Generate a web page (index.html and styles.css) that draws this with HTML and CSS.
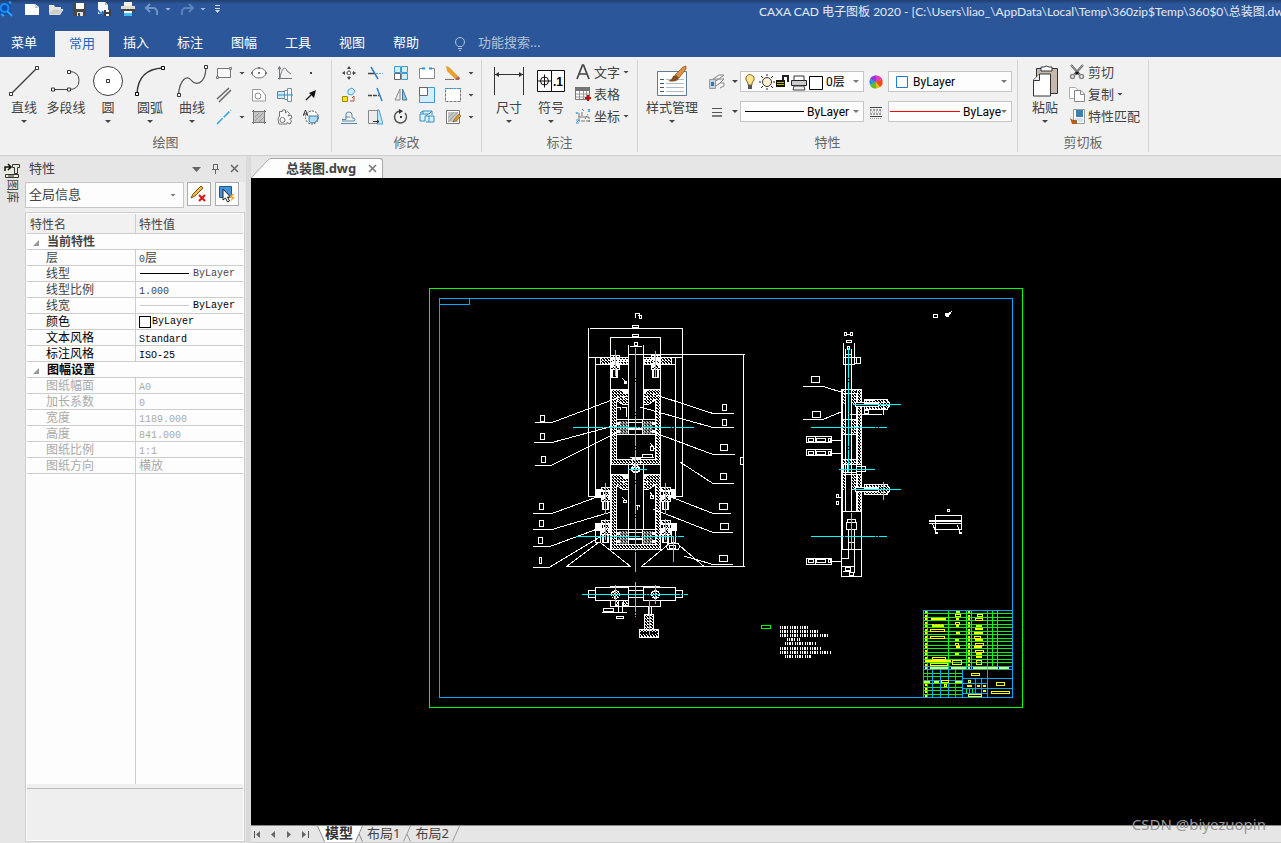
FILE: index.html
```html
<!DOCTYPE html>
<html lang="zh-CN">
<head>
<meta charset="utf-8">
<title>CAXA CAD 电子图板 2020</title>
<link rel="stylesheet" href="styles.css">
</head>
<body>
<header class="titlebar">
  <div class="quick">
    <svg class="logo" width="13" height="20" viewBox="0 0 13 20"><path d="M0 6 5 3l4 1 2 3-1 2 2 3-3 2 2 4-4-3-7 1z" fill="#0d4fae"/><circle cx="4.500" cy="9" r="4" fill="none" stroke="#1b8cf5" stroke-width="2"/><path d="M7 12l5 5M1 15l3 2M9 3l2 1" stroke="#29a3ff" stroke-width="2"/></svg>
    <button class="qbtn" aria-label="新建"><svg width="16" height="16"><path d="M1 3h10l4 3v8H1z" fill="#fff"/><path d="M11 3v4h4z" fill="#c9c9c9"/></svg></button>
    <button class="qbtn" aria-label="打开"><svg width="16" height="16"><path d="M1 13V4h5l1 2h6v2H5z" fill="#e8e5df"/><path d="M4.500 8.500H15l-3 5H1.500z" fill="#d0ccc4" stroke="#fff" stroke-width=".7"/></svg></button>
    <button class="qbtn" aria-label="保存"><svg width="16" height="16"><path d="M1 2h12l1 1v12H2l-1-1z" fill="#484848"/><path d="M4 2h8v6H4z" fill="#fff"/><path d="M5 11h6v4H5z" fill="#e4e4e4"/><path d="M6 12h2v3H6z" fill="#484848"/></svg></button>
    <button class="qbtn" aria-label="另存为"><svg width="16" height="16"><path d="M2 1h7l3 3v9H2z" fill="#f8f8f8"/><path d="M9 1v3h3" fill="#bbb"/><path d="M2 9l2 3h4M6 10l2 2-2 2" fill="none" stroke="#2870b5" stroke-width="1.500"/><path d="M8 9h7v6H8z" fill="#3d3d3d"/><path d="M10 9h3v2h-3zM10 13h3v2h-3z" fill="#fff"/></svg></button>
    <button class="qbtn" aria-label="打印"><svg width="16" height="16"><path d="M4 1h8v5H4z" fill="#f7f2e8"/><path d="M1 5h14v6H1z" fill="#dedad4"/><path d="M1 8h14v3H1z" fill="#474747"/><path d="M4 10h8v5H4z" fill="#41bdf0"/><path d="M4 10h8v2H4z" fill="#fff"/></svg></button>
    <button class="qbtn dim" aria-label="撤销"><svg width="16" height="16"><path d="M6 3 2 7l4 4M3 7h6q5 0 4 7" fill="none" stroke="#7094ca" stroke-width="2"/></svg><span class="caret light"></span></button>
    <button class="qbtn dim" aria-label="重做"><svg width="16" height="16"><path d="M10 3l4 4-4 4M13 7H7q-5 0-4 7" fill="none" stroke="#5c82bb" stroke-width="2"/></svg><span class="caret light"></span></button>
    <button class="qmore" aria-label="自定义"><svg width="7" height="10"><path d="M1 1.500h5M1 4.500h5" stroke="#d5deed"/><path d="M1 6h5L3.500 9z" fill="#d5deed"/></svg></button>
  </div>
  <h1 class="title">CAXA CAD 电子图板 2020 - [C:\Users\liao_\AppData\Local\Temp\360zip$Temp\360$0\总装图.dwg</h1>
</header>
<nav class="menu">
  <button>菜单</button><button class="on">常用</button><button>插入</button><button>标注</button><button>图幅</button><button>工具</button><button>视图</button><button>帮助</button>
  <svg class="bulb" width="12" height="14"><path d="M4 9.500Q1.500 7.500 1.500 5a4.500 4.500 0 0 1 9 0Q10.500 7.500 8 9.500zM4 11.500h4M5 13.500h2" fill="none" stroke="#b4c1d8"/></svg>
  <input class="search" type="text" aria-label="功能搜索" placeholder="功能搜索...">
</nav>

<section class="ribbon">
  <div class="group g-draw">
    <div class="tools">
      <button class="big"><svg width="32" height="32"><path d="M3 29 29 3" stroke="#454545" stroke-width="1.500"/><path d="M1.500 27.500h3v3h-3zM27.500 1.500h3v3h-3z" fill="#fff" stroke="#333"/></svg><span>直线</span><i class="caret"></i></button>
      <button class="big"><svg width="32" height="32"><path d="M3 24.500h16q10 0 10-9t-10-9" fill="none" stroke="#454545"/><path d="M1.500 23h3v3h-3zM17.500 23h3v3h-3zM17.500 5.500h3v3h-3z" fill="#fff" stroke="#333"/></svg><span>多段线</span></button>
      <button class="big"><svg width="32" height="32"><circle cx="16" cy="16" r="14.500" fill="#fff" stroke="#404040"/><path d="M14.500 14.500h3v3h-3z" fill="#fff" stroke="#333"/></svg><span>圆</span><i class="caret"></i></button>
      <button class="big"><svg width="32" height="32"><path d="M3 29Q4 4 29 3" fill="none" stroke="#333" stroke-width="1.300"/><path d="M1.500 27.500h3v3h-3zM27.500 1.500h3v3h-3z" fill="#fff" stroke="#000"/></svg><span>圆弧</span><i class="caret"></i></button>
      <button class="big"><svg width="32" height="32"><path d="M2.500 29C4 14 11 10 15 15s14 6 15-12" fill="none" stroke="#555" stroke-width="1.200"/><path d="M1.500 28.500h3v3h-3zM28.500.5h3v3h-3z" fill="#fff" stroke="#333"/></svg><span>曲线</span><i class="caret"></i></button>
      <div class="mini draw-mini">
        <button class="drop" aria-label="矩形"><svg width="16" height="16"><path d="M1.500 3.500h13v9h-13z" fill="#fafafa" stroke="#777"/><path d="M.5 11.500h2v2h-2zM13.500 2.500h2v2h-2z" fill="#fff" stroke="#777"/></svg><i class="caret"></i></button>
        <button aria-label="椭圆"><svg width="16" height="16"><ellipse cx="8" cy="8" rx="7" ry="5" fill="#fff" stroke="#777"/><path d="M7 7h2v2H7zM0 7h2v2H0zM14 7h2v2h-2zM7 2h2v2H7z" fill="#777"/></svg></button>
        <button aria-label="公式曲线"><svg width="16" height="16"><path d="M2.500 2v12.500M1 13.500h14M3 13C5 1 9 2 10 6t4 3M1 4.500l1.500-3 1.500 3" fill="none" stroke="#71757d"/></svg></button>
        <button aria-label="点"><svg width="16" height="16"><path d="M7 7h2v2H7z" fill="#444"/></svg></button>
        <button aria-label="平行线"><svg width="16" height="16"><path d="M1 12 13 1M3 15 15 3" stroke="#666" stroke-width="1.500"/></svg></button>
        <button aria-label="轮廓"><svg width="16" height="16"><path d="M1.500 14V2.500H10L14.500 8v6z" fill="#fff" stroke="#999"/><circle cx="7" cy="9" r="3" fill="none" stroke="#8a8f98"/></svg></button>
        <button aria-label="轴"><svg width="16" height="16"><path d="M.5 4.500h7v7h-7z" fill="#cde9fa" stroke="#6e8090"/><path d="M7.500 3.500h3v9h-3zM10.500 1.500h4v13h-4z" fill="#f2f8fc" stroke="#6f93b0"/><path d="M0 8h16" stroke="#328dc8"/></svg></button>
        <button aria-label="箭头"><svg width="16" height="16"><path d="m3 13 5-5" stroke="#222" stroke-width="1.500"/><path d="m13 3-2 8-2-2-3-3z" fill="#111"/></svg></button>
        <button class="drop" aria-label="构造线"><svg width="16" height="16"><path d="M1 15 15 1" stroke="#35a5dd" stroke-width="1.500" stroke-dasharray="8 1.500"/></svg><i class="caret"></i></button>
        <button aria-label="剖面线"><svg width="16" height="16"><path d="M3 3h10v10H3z" fill="#c4c4c4"/><path d="M1 2.500h14M1 13.500h14M2.500 1v14M13.500 1v14" stroke="#777"/><path d="m4 8 4-4M4 12l8-8M8 13l5-5" stroke="#999"/></svg></button>
        <button aria-label="齿轮"><svg width="16" height="16"><path d="M2.500 7V2.500h3V1h3v3l2-1.500 2 2L11 7l3-1 1 3-2.500 1 2 2-1.500 3-3-1.500V15H2l-1-5z" fill="#fafafa" stroke="#777"/><circle cx="5.500" cy="11" r="2.500" fill="#fff" stroke="#777"/></svg></button>
        <button aria-label="局部放大"><svg width="16" height="16"><circle cx="9" cy="8.500" r="6.500" fill="#fff" stroke="#555" stroke-dasharray="2 1"/><path d="M6 7h9q0 7-6 7-2 0-3-2z" fill="#a9dffb" stroke="#49758e"/><path d="M0 7 2.500 1 5 7M1 5h3" fill="none" stroke="#333"/></svg></button>
      </div>
    </div>
    <h2>绘图</h2>
  </div>

  <div class="group g-edit">
    <div class="tools">
      <div class="mini edit-mini">
        <button aria-label="平移"><svg width="16" height="16"><path d="M8 2v12M2 8h12" stroke="#666" stroke-dasharray="2 1"/><path d="M8 1l2 3H6zM8 15l2-3H6zM1 8l3-2v4zM15 8l-3-2v4z" fill="#444"/><path d="M6.500 6.500h3v3h-3z" fill="#fff" stroke="#777"/></svg></button>
        <button aria-label="裁剪"><svg width="16" height="16"><path d="m4 2 7 12" stroke="#2d7fc0" stroke-width="1.500"/><path d="M1 8.500h6" stroke="#444" stroke-width="1.500"/><path d="M9 8.500h7" stroke="#58a7d8" stroke-dasharray="2 1"/></svg></button>
        <button aria-label="阵列"><svg width="16" height="16"><path d="M1.500 1.500h6v6h-6zM8.500 1.500h6v6h-6zM8.500 8.500h6v6h-6z" fill="#d3eefd" stroke="#3b9bd6"/><path d="M1.500 8.500h6v6h-6z" fill="#fff" stroke="#666"/></svg></button>
        <button aria-label="打断"><svg width="16" height="16"><path d="M3 3.500H.5v10h15v-10H13" fill="none" stroke="#888"/><path d="M1 4h14v9H1z" fill="#fff"/><path d="M3 3.500h3M10 3.500h3" stroke="#2b91d8" stroke-width="2"/></svg></button>
        <button class="drop" aria-label="删除"><svg width="16" height="16"><path d="M1 1l3 1 9 9-3 3L2 6z" fill="#e8a12b"/><path d="m10 14 3-3 2 2-1 2h-3z" fill="#b26059"/><path d="M0 14.500h9" stroke="#777"/></svg><i class="caret"></i></button>
        <button aria-label="平移复制"><svg width="16" height="16"><path d="M1.500 9.500h5v5h-5z" fill="#f8e71c" stroke="#a08a00"/><path d="M7 3l4-2 3 3-3 4-4-1z" fill="#d3eefd" stroke="#46a2d8"/><path d="M9 14h4V9l-2 2" fill="none" stroke="#c04c37"/></svg></button>
        <button aria-label="延伸"><svg width="16" height="16"><path d="m10 1 5 13" stroke="#2d7fc0" stroke-width="1.500"/><path d="M1 8.500h11" stroke="#444" stroke-width="1.500" stroke-dasharray="4 1"/></svg></button>
        <button aria-label="镜像"><svg width="16" height="16"><path d="M7 2v11H2z" fill="#eee" stroke="#888"/><path d="M9.500 2v11H14z" fill="#8fc9ee" stroke="#46779c"/></svg></button>
        <button aria-label="缩放"><svg width="16" height="16"><path d="M.5.5h15v15H.5z" fill="#d3eefd" stroke="#3b9bd6"/><path d="M.5.5h8v8h-8z" fill="#fff" stroke="#666"/></svg></button>
        <button class="drop" aria-label="分解"><svg width="16" height="16"><path d="M.5 1.500h15v13H.5z" fill="#fff" stroke="#777" stroke-dasharray="3 1"/><path d="M0 1.500h16" stroke="#3b9bd6" stroke-dasharray="2 1"/></svg><i class="caret"></i></button>
        <button aria-label="等距线"><svg width="16" height="16"><path d="M1 10.500h4V5q0-2 3-2t3 3v3h2q2 2 0 3H1M4 8h5M0 14.500h16" fill="none" stroke="#5b8cab"/></svg></button>
        <button aria-label="拉伸"><svg width="16" height="16"><path d="M10 1h2l4 14h-6z" fill="#bee7fc" stroke="#45a2d9"/><path d="M1.500 1.500h9v13h-9z" fill="#ececec" stroke="#888"/><path d="M6 12.500h6M10 11l2 1.500-2 1.500" stroke="#333" fill="none"/></svg></button>
        <button aria-label="旋转"><svg width="16" height="16"><path d="M7 2a6 6 0 1 0 5 2" fill="none" stroke="#555" stroke-width="1.500"/><path d="M6 0l4 2-4 3zM7 7h2v2H7z" fill="#333"/></svg></button>
        <button aria-label="立体"><svg width="16" height="16"><path d="m1 4 3-2h9l-3 3H1v7h5V7h9v6H7M4 2v3M13 2v4M7 7l2-2M10 7v6" fill="#d8f1ff" stroke="#348fc4"/></svg></button>
        <button class="drop" aria-label="编辑填充"><svg width="16" height="16"><path d="M1.500 1.500h13v13h-13z" fill="#fff" stroke="#777"/><path d="M3 3h10v10H3z" fill="#c4c4c4"/><path d="m3 9 6-6M3 13 13 3M8 13l5-5" stroke="#a2a2a2"/><path d="m9 11 5-6 2 2-5 5-3 1z" fill="#e59d24" stroke="#6e4e20" stroke-width=".6"/></svg><i class="caret"></i></button>
      </div>
    </div>
    <h2>修改</h2>
  </div>

  <div class="group g-dim">
    <div class="tools">
      <button class="big"><svg width="32" height="32"><path d="M1.500 2v28M30.500 2v28M2 9.500h28" stroke="#333"/><path d="m2 9.500 4-2.500v5zM30 9.500l-4-2.500v5z" fill="#333"/></svg><span>尺寸</span><i class="caret"></i></button>
      <button class="big"><svg class="sym" width="32" height="32"><path d="M2.500 5.500h27v21h-27zM16.500 5v22" fill="#fff" stroke="#111"/><circle cx="9.500" cy="16" r="4" fill="none" stroke="#111"/><path d="M3 16h13M9.500 9.500v13" stroke="#111"/><text x="18" y="21">.1</text></svg><span>符号</span><i class="caret"></i></button>
      <div class="list">
        <button><svg width="16" height="16"><path d="M2 15 7.500 1h1L14 15M4 10h8" fill="none" stroke="#444" stroke-width="1.700"/></svg>文字<i class="caret"></i></button>
        <button><svg width="16" height="16"><path d="M.5 1.500h14v12H.5z" fill="#fff" stroke="#777"/><path d="M0 1h15v4H0z" fill="#747474"/><path d="M1 8h14M1 11h14M4.500 5v8M8.500 5v8M11.500 5v8" stroke="#999"/><path d="M13 9v6M10 12h6" stroke="#c40000" stroke-width="2"/></svg>表格</button>
        <button><svg width="16" height="16"><path d="M4 5v8h11M7 4v5h7v5M3 9h4M10 11l3-5" fill="none" stroke="#777" stroke-dasharray="4 1"/><path d="M1 4l1 2 1-2M7 1l2 2M13 1l2 3M15 1l-2 3M1 12h3l-3 3h3" fill="none" stroke="#46a2d8"/></svg>坐标<i class="caret"></i></button>
      </div>
    </div>
    <h2>标注</h2>
  </div>

  <div class="group g-prop">
    <div class="tools">
      <button class="big wide"><svg width="32" height="32"><path d="M1.500 6.500h29v24h-29z" fill="#fff" stroke="#607b91"/><path d="M4 14.500h4M4 18.500h4M4 22.500h4M4 26.500h4" stroke="#44596b"/><path d="M10 14.500h18M10 18.500h18M10 22.500h18M10 26.500h18" stroke="#a9bccb"/><path d="m19 10 8-8 3-1v3l-7 9z" fill="#d99245" stroke="#855221" stroke-width=".7"/><path d="M12 16q4-1 5-5l3-1 3 3q-2 5-11 3z" fill="#805022"/></svg><span>样式管理</span><i class="caret"></i></button>
      <div class="props">
        <button class="drop" aria-label="图层"><svg width="16" height="16"><path d="m4 5 6-4h5l-5 4zM5 8l5-3h5l-4 4M7 12l4-3h4v3l-4 2" fill="#f6f6f6" stroke="#888"/><path d="M.5 5.500h6v9h-6z" fill="#c9d5df" stroke="#999"/><path d="M2 8h3v4H2z" fill="#2f77b1"/></svg><i class="caret"></i></button>
        <label class="combo"><svg width="82" height="19"><path d="M6 13V11Q3 8 4 5q3-5 8 0 1 3-2 6v2z" transform="translate(1 0)" fill="#ffe693" stroke="#806520"/><path d="M7 13h4v4H7z" fill="#555"/><circle cx="26" cy="10" r="4.500" fill="#fff1d2" stroke="#333"/><path d="M26 2v2M26 16v2M18 10h2M32 10h2M20 4l2 2M30 14l2 2M20 16l2-2M30 6l2-2" stroke="#222"/><path d="M35 8h9v7h-9z" fill="#131300"/><path d="M36 10.500h7M36 12.500h7" stroke="#b8b319"/><path d="M42 8V4h5v6" fill="none" stroke="#222" stroke-width="2"/><path d="M53 8V4h10v4" fill="#fff" stroke="#333"/><path d="M50.500 8.500h15v5h-15z" fill="#ccc" stroke="#222"/><path d="M53 14h10l1 4H52z" fill="#e3edf2" stroke="#444"/><path d="M68.500 4.500h13v13h-13z" fill="#fff" stroke="#000"/></svg><select aria-label="当前图层"><option>0层</option></select><i class="caret"></i></label>
        <svg class="mid" width="16" height="16"><circle cx="8" cy="8" r="6.500" fill="#e9ba1d"/><path d="M8 8V1.500A6.500 6.500 0 0 0 2 5z" fill="#9338df"/><path d="M8 8V1.500A6.500 6.500 0 0 1 14 5z" fill="#df3cc5"/><path d="m8 8 6-3q2 5-2 8z" fill="#ee4b24"/><path d="M8 8 2 5q-1 3 0 6z" fill="#2390ea"/><path d="m8 8-6 3q2 4 6 3.500z" fill="#62bd2d"/></svg>
        <label class="combo"><svg width="21" height="19"><path d="M7.500 4.500h11v11h-11z" fill="#fff" stroke="#1c7cd5"/></svg><select aria-label="颜色"><option>ByLayer</option></select><i class="caret"></i></label>
        <button class="drop" aria-label="线宽设置"><svg width="16" height="16"><path d="M3 4.500h10M3 8.500h10" stroke="#555"/><path d="M3 12h10" stroke="#555" stroke-width="1.500"/></svg><i class="caret"></i></button>
        <label class="combo"><svg class="line" width="63" height="19"><path d="M4 9.500h59" stroke="#000"/></svg><select aria-label="线型"><option>ByLayer</option></select><i class="caret"></i></label>
        <svg class="mid" width="16" height="16"><path d="M2 3.500h12M2 12.500h12" stroke="#444"/><path d="M2 6h12M2 10h12" stroke="#555" stroke-dasharray="2 1"/><path d="M2 8h12M2 14.500h12" stroke="#999" stroke-dasharray="1 1"/></svg>
        <label class="combo"><svg class="line" width="71" height="19"><path d="M1 9.500h70" stroke="#f00"/></svg><select aria-label="线宽"><option>ByLayer</option></select><i class="caret"></i></label>
      </div>
    </div>
    <h2>特性</h2>
  </div>

  <div class="group g-clip">
    <div class="tools">
      <button class="big"><svg width="32" height="32"><path d="M7.500 3.500h21v25h-21z" fill="#c6b8ac" stroke="#333"/><path d="M12 2h3q2-2 5 0h3v4H12z" fill="#fff" stroke="#333"/><path d="m4.500 15 6-6h11v22h-17z" fill="#fff" stroke="#333"/><path d="M4.500 15.500h6V9" fill="#eee" stroke="#333"/></svg><span>粘贴</span><i class="caret"></i></button>
      <div class="list">
        <button><svg width="16" height="16"><path d="m2 1 9 10M14 1 5 11" stroke="#555" stroke-width="2"/><path d="m2 1 9 10M14 1 5 11" stroke="#eee" stroke-width=".6"/><circle cx="3.500" cy="12.500" r="2" fill="none" stroke="#888" stroke-width="1.500"/><circle cx="12.500" cy="12.500" r="2" fill="none" stroke="#888" stroke-width="1.500"/><path d="m8 7 2 2-2 2-2-2z" fill="#111"/></svg>剪切</button>
        <button><svg width="16" height="16"><path d="M.5 1.500h6l3 3v8h-9z" fill="#fff" stroke="#aaa"/><path d="M5.500 4.500H12l3.500 3.500v7.500h-10z" fill="#fff" stroke="#888"/><path d="M11.500 5v3.500H15" fill="none" stroke="#888"/></svg>复制<i class="caret"></i></button>
        <button><svg width="16" height="16"><path d="M4.500 1.500h11v14h-11z" fill="#fff" stroke="#999"/><path d="M7 2h7v7H7z" fill="#3c7fb1"/><path d="M6 11h8M9 13h5" stroke="#a0c5df"/><path d="M1 10l3 2h4v4H3z" fill="#b15e20"/></svg>特性匹配</button>
      </div>
    </div>
    <h2>剪切板</h2>
  </div>
</section>

<main class="work">
  <aside class="rail"><button><svg width="16" height="17"><path d="M0 1h16v16H0z" fill="#e8eadb"/><path d="M1 9V5h5M4 2l3 3-3 3" fill="none" stroke="#111" stroke-width="1.500"/><path d="M8.500 2.500h7v3h-2v6h-3v-6h-2zM1.500 12.500h13v3h-13zM4 14h6" fill="none" stroke="#333"/></svg><span>图库</span></button></aside>
  <section class="panel">
    <div class="panel-head"><h2>特性</h2>
      <button aria-label="菜单"><svg width="11" height="11"><path d="M1 4h9L5.500 9z" fill="#666"/></svg></button>
      <button aria-label="固定"><svg width="11" height="11"><path d="M3 1.500h5M3.500 1.500v5M7.500 1.500v5M2 6.500h7M5.500 7v4" stroke="#666"/></svg></button>
      <button aria-label="关闭"><svg width="11" height="11"><path d="m2 2 7 7M9 2 2 9" stroke="#666" stroke-width="1.500"/></svg></button>
    </div>
    <div class="panel-bar">
      <label class="combo pick"><select aria-label="选择对象"><option>全局信息</option></select><i class="caret"></i></label>
      <button class="tool" aria-label="清除选择"><svg width="18" height="18"><path d="m1 13 2-4 8-8 2 2-8 8z" fill="#f3bd48" stroke="#7a4c18"/><path d="m9 10 6 6M15 10l-6 6" stroke="#d51616" stroke-width="2"/></svg></button>
      <button class="tool" aria-label="快速选择"><svg width="18" height="18"><path d="M1.500 1.500h12v11h-12z" fill="#4492d9" stroke="#125d9f"/><path d="M5 4v11l2.500-2 2 4 2-1-2-4h3z" fill="#fff" stroke="#222"/><path d="m14 9-3 4h3l-2 4 5-5h-3l2-3z" fill="#f4a125"/></svg></button>
    </div>
    <div class="grid">
      <table>
        <thead><tr><th>特性名</th><th>特性值</th></tr></thead>
        <tbody>
          <tr class="sec"><th colspan="2"><i></i>当前特性</th></tr>
          <tr><td>层</td><td><b>0</b>层</td></tr>
          <tr><td>线型</td><td><span class="val"><i class="rule"></i><b>ByLayer</b></span></td></tr>
          <tr><td>线型比例</td><td><b>1.000</b></td></tr>
          <tr><td>线宽</td><td class="dk"><span class="val"><i class="rule pale"></i><b>ByLayer</b></span></td></tr>
          <tr class="dk"><td>颜色</td><td><span class="swatch"><i></i><b>ByLayer</b></span></td></tr>
          <tr class="dk"><td>文本风格</td><td><b>Standard</b></td></tr>
          <tr class="dk"><td>标注风格</td><td><b>ISO-25</b></td></tr>
          <tr class="sec dk"><th colspan="2"><i></i>图幅设置</th></tr>
          <tr class="off"><td>图纸幅面</td><td><b>A0</b></td></tr>
          <tr class="off"><td>加长系数</td><td><b>0</b></td></tr>
          <tr class="off"><td>宽度</td><td><b>1189.000</b></td></tr>
          <tr class="off"><td>高度</td><td><b>841.000</b></td></tr>
          <tr class="off"><td>图纸比例</td><td><b>1:1</b></td></tr>
          <tr class="off"><td>图纸方向</td><td>横放</td></tr>
        </tbody>
      </table>
      <div class="rest"><span></span><span></span></div>
      <div class="desc"></div>
    </div>
  </section>

  <section class="doc">
    <div class="doc-tabs"><svg width="20" height="20"><path d="M0 20.500 17 2q2-1.500 3-1.500V20" fill="#fdfdfd" stroke="none"/><path d="M0 20 17 2q1.500-1.500 3-1.500" fill="none" stroke="#a8a8a8"/></svg><div class="doc-tab"><span>总装图.dwg</span><button aria-label="关闭"><svg width="9" height="9"><path d="m1 1 7 7M8 1 1 8" stroke="#777" stroke-width="1.500"/></svg></button></div></div>
    <div class="canvas">
      <svg class="sheet" viewBox="251 178 1030 647" preserveAspectRatio="xMidYMid meet" shape-rendering="crispEdges">
        <defs>
          <pattern id="h" width="3" height="3" patternUnits="userSpaceOnUse"><path d="M0 0h1v1H0zM1 1h1v1H1zM2 2h1v1H2zM2 0h1v1H2z" fill="#fff"/></pattern>
          <g id="bolt"><path d="M-4.500 0h9v4h-9zM-3 4h6v4h-6zM-4.500 8h9v6h-9z" fill="url(#h)" stroke="#fff"/><path d="M-5 3h10v2H-5zM-4 9h3v3h-3zM2 9h3v3H2z" fill="#fff"/><path d="M-3.500 14v8.500h6V14M-2.500 14v8M1.500 14v8" fill="none" stroke="#fff"/></g>
          <g id="cyl"><path d="M611 389h17v7h-6l6 4v4h-6l-6-4v59h39v-59l-6 4h-6v-4l6-4h-6v-7h17v75h-49z" fill="url(#h)" stroke="#fff"/><path d="M621 389h7v5h-3zM644 389h5l-4 5z" fill="#fff"/></g>
          <g id="piston"><path d="M616.500 0v15M655.500 0v15M616 0h39M616 15h39M628 3h15M628 8.500h15M628 10h15M628.500 0v15M642.500 0v15" stroke="#fff"/><path d="M618 1h10v14h-10zM643 1h10v14h-10z" fill="url(#h)"/><path d="M617 2h3v3h-3zM617 10h3v3h-3zM652 2h3v3h-3zM652 10h3v3h-3z" fill="#fff"/></g>
          <g id="plug"><path d="M806.500 0h25v6h-25zM808.500 1.500h5v3h-5zM816.500 1.500h9v3h-9zM828.500 1.500h2v3h-2zM832 3.500h9M815.500 0v6" fill="none" stroke="#fff"/></g>
        </defs>
        <g fill="none">
          <path d="M429.500 288.500h593v419h-593z" stroke="#0f0"/>
          <path d="M439.500 298.500h573v399h-573zM439 304.500h30.500V298" stroke="#00a8ff"/>
        </g>
        <g fill="none" stroke="#fff">
          <path d="M635.500 318v-5h4v5h2v-3h-4M632.500 325.500h6v2h-6zM632.500 334.500h6v2h-6zM634.500 342.500h3v3h-3zM630 346.500h12M590 328.500h92M611 337.500h49"/>
          <path d="M588.500 328v168h7V357M682.500 328v168h-7V357M588 357.500h23M660 357.500h22M595 364.500h16M660 364.500h16M610.500 337v212h50V337M628.500 345v74M643.500 345v74M628.500 464v65M643.500 464v65M628 354.500h117M743.500 354v212M740.500 457.500h3v7h-3z"/>
          <path d="M600.500 357.500h28v7h-28zM643.500 357.500h28v7h-28z" fill="url(#h)"/>
          <path d="M620 359.500h8M620 361.500h8M643 359.500h8M643 361.500h8"/>
          <path d="M616 417v-10h4v3M626 417v-10h-4M642.500 454.500h10v3h-10zM630 457.500h24M632 464v-6h8v6M650.500 446.500h3v4h-3zM650 443l5 6"/>
          <path d="m622 378 5 5" /><path d="M624 381h2v2h-2z" fill="#fff"/>
          <path d="M622 497l5 5M623.500 500.500h3v2h-3zM650 492l4 6M650.500 495.500h3v3h-3zM636 505h4M637.500 505v5M639.500 505v2"/>
        </g>
        <use href="#bolt" x="615" y="355"/><use href="#bolt" x="656" y="355"/>
        <use href="#cyl"/><use href="#cyl" y="85"/>
        <use href="#piston" y="419.500"/><use href="#piston" y="529.500"/>
        <use href="#bolt" x="606" y="487"/><use href="#bolt" x="666" y="487"/><use href="#bolt" x="606" y="520"/><use href="#bolt" x="666" y="520"/>
        <g fill="none" stroke="#fff">
          <circle cx="635.500" cy="469" r="4" fill="url(#h)"/><path d="M632 467h7v4h-7z"/>
          <path d="M596 489h4v8h-4zM671 489h4v8h-4zM595 523h6v7h-6zM671 523h5v7h-5z" fill="#fff"/>
          <path d="M595.500 523v19h5v-19M671.500 523v19h4v-19M668 543.500h10l2 3-2 3h-10l-2-3zM669.500 545.500h6v3h-6z"/>
          <path d="M566.500 566.500h64L601 543M598 543l-31.500 23.500M641.500 566.500 670 543M680 546l24 20.500M641 566.500h104"/>
          <path d="M535 422.500h17L620 397M540.500 415.500h4v6h-4zM534 442.500h18L617 425M540.500 433.500h4v6h-4zM535 465.500h16L618 432M541.500 456.500h4v6h-4zM533 513.500h19L597 497M539.500 503.500h4v6h-4zM533 529.500h19L611 512M539.500 520.500h4v6h-4zM533 546.500h17L600 528M538.500 537.500h4v6h-4zM533 567.500h16L600 537M539.500 557.500h2v6h-2z"/>
          <path d="M734 413.500h-21L653 394M722.500 404.500h4v6h-4zM734 427.500h-21L640 407M722.500 419.500h4v6h-4zM735 454.500h-22L650 431M720.500 444.500h7v6h-7zM734 483.500h-21L680 462M720.500 473.500h6v6h-6zM731 513.500h-18L671 497M719.500 503.500h8v6h-8zM733 532.500h-20L653 509M720.500 523.500h8v6h-8zM733 564.500h-20L684 556M719.500 555.500h8v6h-8z"/>
          <path d="M588.500 590.500h7v7h-7zM675.500 590.500h7v7h-7zM595.500 587.500h33v13h-33zM643.500 587.500h32v13h-32zM610 586.500h50M628 590.500h15M628 597.500h15M610.500 600v6.500h50V600M603.500 608.500h10v3h-10zM602 612.500h25M616.500 616.500h7v2h-7zM618.500 602v10h4v-10"/>
          <path d="M615 600.500h3v5h-3zM623 600.500h5v5h-5z" fill="url(#h)"/>
          <circle cx="615.500" cy="594.500" r="4" fill="url(#h)"/><circle cx="655.500" cy="594.500" r="4" fill="url(#h)"/>
          <path d="M648.500 606v8M651.500 606v8"/><path d="M644.500 614.500h9v15h-9zM639.500 629.500h19v8h-19z" fill="url(#h)"/><path d="M641 632h16v2h-16z" fill="#000" stroke="none"/>
        </g>
        <g fill="none" stroke="#fff">
          <path d="M933.500 314.500h4v3h-4zM844.500 332.500h2v3h-2zM850.500 332.500h2v3h-2zM846 334h4M846.500 340.500h5v2h-5zM843.500 343v21h11v-21M843 357.500h11M856.500 357.500h4v6h-4zM854 357.500h6M854 363.500h6M845.500 349v162M851.500 349v162M845 354.500h6M847.500 346.500h2v3h-2z"/>
          <path d="M945 313h4l2-1-3 5-3-2z" fill="#fff"/>
          <path d="M841.500 389v188M842.500 389v160M861.500 389v188M856.500 393v118M842 389.500h20M842 393.500h14M842 419.500h15M842 434.500h15M842 459.500h15M842 464.500h20M842 474.500h20M842 511.500h20M842 549.500h20M842 576.500h20M848.500 400v20"/>
          <path d="M857.500 389.500h4v75h-4zM857.500 474.500h4v37h-4z" fill="url(#h)"/>
          <path d="M842 389h3v16h-3zM852 389h4v16h-4zM842 420h3v14h-3zM852 420h4v14h-4zM842 459h14v6h-14zM842 475h3v15h-3zM852 475h4v15h-4z" fill="url(#h)" stroke="none"/>
          <path d="M864 399.500h23l2 3v4l-2 3h-23zM864 484.500h23l2 3v4l-2 3h-23z" fill="url(#h)"/>
          <path d="M855.500 402.500h23v4h-23zM855.500 487.500h23v4h-23z" fill="#000"/>
          <path d="M864 400.500h10M864 403h14M864 488h14M883.500 399v16M850 414.500h32M864.500 410.500h4v3h-4z"/>
          <path d="M843.500 464.500h13v8h-13zM856.500 466.500h9v5h-9zM847 464v8M851 464v8M836.500 494.500h2v3h-2zM836.500 501.500h2v3h-2zM839 497.500h4"/>
          <path d="M846.500 522.500h10v7h-10zM847.500 519.500h8v3h-8zM848.500 530v28.500H842M854.500 530v43M848 542.500h6M842 566.500h12M845.500 567.500h5v3h-5zM849.500 572.500h4v3h-4zM843 571.500h8"/>
          <path d="M803 386.500h20L841 392M811.500 376.500h8v6h-8zM803 419.500h20L841 412M812.500 411.500h8v6h-8z"/>
          <path d="M935.500 515.500h26v14h-26zM929 523.500h33M932 523l4 9M957 525l3 7M947.500 509.500h2v2h-2z"/><path d="M929 521h22M951 520.500h11" stroke-width="2"/><path d="M935 532h3v2h-3zM959 532h3v2h-3z" fill="#fff" stroke="none"/>
        </g>
        <use href="#plug" y="436.500"/><use href="#plug" y="449.500"/><use href="#plug" y="558"/>
        <g fill="none" stroke="#0ff">
          <g stroke-dasharray="30 1 2 1"><path d="M635.500 348v224M635.500 582v35M848.500 348v124M573 427.500h121M576 536.500h108M582 594.500h106M811 427.500h76M811 536.500h76"/></g>
          <path d="M615.500 350v26M655.500 351v26M605.500 483v31M665.500 483v31M605.500 519v21M665.500 519v21M673.500 536v26M628 469.500h19M615.500 585v19M655.500 585v19M649.500 600v35M853 404.500h48M853 489.500h48M839 469.500h36M883.500 482v18M851.500 513v36"/>
        </g>
        <path d="M761.500 625.500h9v3h-9z" fill="none" stroke="#0f0"/>
        <g fill="none" stroke="#fff" stroke-width="3" stroke-dasharray="1 1 1 1 2 1 1 2">
          <path d="M780 627.500h30M780 631.500h39M780 635.500h50M787 639.500h13M785 643.500h32M780 648.500h42M780 652.500h51M785 656.500h26"/>
        </g>
        <g fill="none">
          <path stroke="#0f0" d="M924 613.500h88M924 617.500h88M924 620.500h88M924 624.500h88M924 627.500h88M924 631.500h88M924 634.500h88M924 638.500h88M924 641.500h88M924 645.500h88M924 648.500h88M924 652.500h88M924 655.500h88M924 659.500h88M924 662.500h88M927.500 611v58M948.500 611v58M966.500 611v58M971.500 611v58M987.500 611v58M992.500 611v58M997.500 611v58M924 673.500h38M924 676.500h38M924 683.500h38M924 687.500h38M924 690.500h38M924 694.500h38M966.500 688v5M969.500 688v5M972.500 688v5"/>
          <path stroke="#00a8ff" d="M923.500 610.500h89v87h-89zM924 666.500h88M924 669.500h88M962.500 669v28M987.500 669v28M924 680.500h38M962 678.500h50M962 688.500h50M962 683.500h25M962 693.500h25M927.500 669v28M932.500 669v28M940.500 669v28M948.500 669v28M955.500 669v28M975.500 679v14M981.500 679v14"/>
          <path stroke="#ff0" stroke-width="2" stroke-dasharray="2 1.500" d="M925.500 611v58M969 611v58M926 684v13"/>
          <path stroke="#ff0" stroke-width="2" d="M931 619h15M956 612h4M956 619h3M956 626h3M956 633h4M955 640h4M956 647h4M955 654h4M976 626h6M975 629h8M974 633h9M975 640h8M974 647h8M976 654h6M976 657h6M927 661h24M930 668h18M951 668h15M973 668h14M988 668h10M999 668h10M924 682h6M934 682h5M955 682h7M967 686h5M977 686h3M983 686h3M983 691h3M932 626h12"/>
          <path stroke="#ff0" stroke-dasharray="2 1" stroke-width="2" d="M932 625h12"/>
          <path stroke="#ff0" d="M930.500 629.500h14v2h-14zM930.500 636.500h14v2h-14zM932.500 657.500h13v2h-13zM930.500 663.500h17v2h-17zM955.500 614.500h5v2h-5zM955.500 622.500h4v2h-4zM955.500 643.500h3v2h-3zM952.500 660.500h9v4h-9zM977.500 614.500h5v2h-5zM975.500 618.500h7v2h-7zM974.500 636.500h6v2h-6zM975.500 643.500h8v2h-8zM975.500 650.500h8v2h-8zM976.500 660.500h5v4h-5zM971.500 673.500h8v2h-8zM996.500 682.500h8v3h-8zM991.500 691.500h18v2h-18zM968.500 694.500h13v2h-13zM941.500 680.500h7v2h-7zM944.500 684.500h2v2h-2zM968.500 680.500h2v2h-2z"/>
        </g>
      </svg>
    </div>
    <div class="layouts">
      <button class="nav" aria-label="第一个"><svg width="8" height="9"><path d="M1.500 1v7" stroke="#555"/><path d="M7 1v7L3 4.500z" fill="#666"/></svg></button>
      <button class="nav" aria-label="上一个"><svg width="8" height="9"><path d="M6 1v7L2 4.500z" fill="#666"/></svg></button>
      <button class="nav" aria-label="下一个"><svg width="8" height="9"><path d="M2 1v7l4-3.500z" fill="#666"/></svg></button>
      <button class="nav" aria-label="最后一个"><svg width="8" height="9"><path d="M7.500 1v7" stroke="#555"/><path d="M1 1v7l4-3.500z" fill="#666"/></svg></button>
      <button class="sheet-tab on"><svg width="8" height="16"><path d="M0 0h8v16z" fill="#fff"/><path d="m.5 0 7 15.500" stroke="#888"/></svg><span>模型</span><svg width="8" height="16"><path d="M0 0h8L0 16z" fill="#fff"/><path d="m7.500 0-7 15.500M4 8l3.500 7.500" stroke="#888"/></svg></button>
      <button class="sheet-tab"><span>布局1</span><svg width="8" height="16"><path d="m7.500 0-7 15.500M4 8l3.500 7.500" stroke="#999"/></svg></button>
      <button class="sheet-tab"><span>布局2</span><svg width="8" height="16"><path d="m7.500 0-7 15.500" stroke="#999"/></svg></button>
    </div>
    <p class="mark">CSDN @biyezuopin</p>
  </section>
</main>
</body>
</html>
```
FILE: styles.css
```css
* { box-sizing: border-box; }
body {
  margin: 0;
  height: 100vh;
  min-width: 1150px;
  display: flex;
  flex-direction: column;
  overflow: hidden;
  background: #e6e6e6;
  color: #444;
  font: 13px/18px "Noto Sans", "Noto Sans CJK SC", sans-serif;
}
svg { display: block; flex: none; }
h1, h2, p { margin: 0; font-size: 13px; font-weight: 400; }
button {
  display: flex;
  align-items: center;
  margin: 0;
  padding: 0;
  border: 0;
  background: none;
  color: inherit;
  font: inherit;
  white-space: nowrap;
}
.caret {
  flex: none;
  width: 6px;
  height: 3px;
  background: #444;
  clip-path: polygon(0 0, 100% 0, 50% 100%);
}
.caret.light { background: #a9bbd8; }

.titlebar {
  display: flex;
  flex: none;
  justify-content: space-between;
  height: 28px;
  overflow: hidden;
  background: linear-gradient(#203f6e, #2b579a 4px);
  color: #e4eaf4;
}
.quick { display: flex; align-items: center; height: 18px; }
.logo { margin-right: 11px; }
.qbtn { gap: 7px; margin-right: 8px; }
.qbtn.dim { gap: 5px; margin-right: 8px; }
.title { width: 522px; font: 12px/24px Lato, "Noto Sans CJK SC", sans-serif; white-space: nowrap; }

.menu {
  display: flex;
  flex: none;
  align-items: flex-end;
  height: 29px;
  background: #2b579a;
  color: #fff;
}
.menu button { justify-content: center; width: 54px; height: 26px; padding-bottom: 4px; }
.menu button:first-child { justify-content: flex-start; width: 55px; padding-left: 11px; }
.menu .on { border: 1px solid #f4f4f4; border-bottom: 0; background: #f1f1f1; color: #1e66c0; }
.bulb { margin: 0 12px 6px 21px; }
.search {
  width: 160px;
  height: 26px;
  padding: 0 0 4px;
  border: 0;
  background: none;
  color: #fff;
  font: inherit;
}
.search::placeholder { color: #b4c1d8; opacity: 1; }

.ribbon {
  display: flex;
  flex: none;
  height: 99px;
  padding: 3px 0;
  border-bottom: 1px solid #cfcfcf;
  background: #f1f1f1;
}
.group {
  display: flex;
  flex: none;
  flex-direction: column;
  justify-content: space-between;
  border-right: 1px solid #d4d4d4;
}
.group h2 { color: #666; line-height: 20px; text-align: center; }
.tools { display: flex; height: 70px; padding: 2px 3px 0; }
.g-draw { width: 332px; }
.g-edit { width: 150px; }
.g-dim { width: 156px; }
.g-prop { width: 380px; }
.g-clip { width: 131px; }
.g-edit .tools { padding-left: 9px; }
.g-dim .tools, .g-clip .tools { padding-left: 6px; }
.big { flex: none; flex-direction: column; width: 42px; height: 66px; padding-top: 3px; line-height: 20px; }
.big .caret { margin-top: 3px; }
.big.wide { width: 62px; }
.sym text { font: bold 12px "Liberation Sans", sans-serif; fill: #000; }
.mini { display: grid; grid-auto-rows: 22px; align-items: center; }
.draw-mini { grid-template-columns: 35px 26px 26px 16px; padding-left: 3px; }
.edit-mini { grid-template-columns: repeat(5, 26px); }
.drop { gap: 7px; }
.list { display: grid; grid-auto-rows: 22px; padding-left: 3px; }
.list button { gap: 3px; padding-bottom: 2px; }
.props {
  display: grid;
  grid-template-columns: 33px 124px 24px 124px;
  grid-auto-rows: 21px;
  row-gap: 9px;
  align-items: center;
  padding: 9px 0 0 4px;
}
.g-prop .drop { gap: 7px; padding-left: 2px; }
.mid { justify-self: center; }
.combo {
  display: flex;
  align-items: center;
  height: 21px;
  padding-right: 4px;
  border: 1px solid #c6c6c6;
  background: #fdfdfd;
  color: #000;
}
.combo .caret { background: #777; }
.combo select {
  flex: 1;
  min-width: 0;
  width: 0;
  height: 18px;
  margin: 0;
  padding: 0 0 0 3px;
  border: 0;
  appearance: none;
  background: none;
  color: inherit;
  font: 12px/18px Roboto, "Noto Sans CJK SC", sans-serif;
}

.work { display: flex; flex: 1; min-height: 0; }
.rail { flex: none; width: 25px; padding: 6px 0 0 4px; }
.rail button { flex-direction: column; }
.rail span {
  font-size: 12px;
  line-height: 16px;
  writing-mode: vertical-rl;
  text-orientation: sideways;
}
.panel { display: flex; flex: none; flex-direction: column; width: 220px; padding-bottom: 1px; }
.panel-head { display: flex; align-items: center; gap: 8px; height: 26px; padding: 0 5px 2px 4px; }
.panel-head h2 { flex: 1; }
.panel-bar { display: flex; gap: 3px; height: 30px; background: #f0f0f0; }
.pick { width: 159px; height: 26px; padding: 0 7px 0 0; color: #444; }
.pick select { font-size: 13px; }
.tool { justify-content: center; width: 24px; height: 24px; border: 1px solid #acacac; background: #fdfdfd; }
.panel-bar .tool + .tool { margin-left: 1px; }
.grid {
  display: flex;
  flex: 1;
  flex-direction: column;
  min-height: 0;
  padding: 1px;
  border: 1px solid #cdcdcd;
  background: #fdfdfd;
}
table {
  width: 100%;
  border-collapse: separate;
  border-spacing: 0;
  table-layout: fixed;
  font: 12px/14px "Noto Sans CJK SC", sans-serif;
}
th, td { height: 16px; padding: 0 0 0 3px; border-bottom: 1px solid #cdcdcd; text-align: left; vertical-align: top; font-weight: 400; white-space: nowrap; }
td:first-child { width: 109px; padding-left: 19px; border-right: 1px solid #cdcdcd; }
thead th { height: 20px; background: #f1f1f1; vertical-align: middle; }
thead th:first-child { width: 109px; border-right: 1px solid #cdcdcd; }
td b { font: 10px/8px "Liberation Mono", monospace; }
.sec th { padding-left: 6px; font-weight: 700; }
.sec i {
  display: inline-block;
  width: 6px;
  height: 6px;
  margin-right: 8px;
  background: #999;
  clip-path: polygon(100% 0, 100% 100%, 0 100%);
}
.dk { color: #000; }
.off { color: #aaa; }
.val { display: flex; align-items: center; gap: 4px; height: 15px; }
.rule { width: 49px; height: 1px; margin-left: 1px; background: #000; }
.rule.pale { background: #ccc; }
.swatch { display: flex; align-items: center; gap: 1px; height: 15px; }
.swatch i { width: 12px; height: 12px; border: 1px solid #000; }
.rest { display: grid; flex: 1; grid-template-columns: 109px 1fr; }
.rest span:first-child { border-right: 1px solid #cdcdcd; }
.desc { height: 56px; border-top: 4px solid #efefef; background: linear-gradient(#bbb 1px, #efefef 1px); }

.doc { position: relative; display: flex; flex: 1; flex-direction: column; min-width: 0; margin-left: 1px; border-left: 5px solid #dadada; }
.doc-tabs { display: flex; flex: none; align-items: flex-end; height: 22px; }
.doc-tab {
  display: flex;
  align-items: center;
  gap: 12px;
  width: 112px;
  height: 20px;
  padding: 0 0 1px 15px;
  border: 1px solid #a8a8a8;
  border-width: 1px 1px 0 0;
  border-radius: 0 3px 0 0;
  background: #fdfdfd;
  font-weight: 700;
}
.canvas { display: flex; flex: 1; min-height: 0; background: #000; }
.sheet { width: 100%; height: 100%; }
.layouts { display: flex; flex: none; height: 18px; padding-left: 2px; border-top: 1px solid #888; border-bottom: 1px solid #ccc; }
.nav { width: 16px; height: 16px; }
.sheet-tab { height: 16px; line-height: 14px; }
.sheet-tab span { height: 16px; padding: 0 3px 0 4px; }
.sheet-tab.on { color: #333; font-size: 14px; font-weight: 700; }
.sheet-tab.on span { padding: 0 2px 0 0; background: #fff; }
.mark {
  position: absolute;
  right: 15px;
  bottom: 9px;
  color: #999;
  font: 15px/20px "Noto Sans", sans-serif;
}
```
